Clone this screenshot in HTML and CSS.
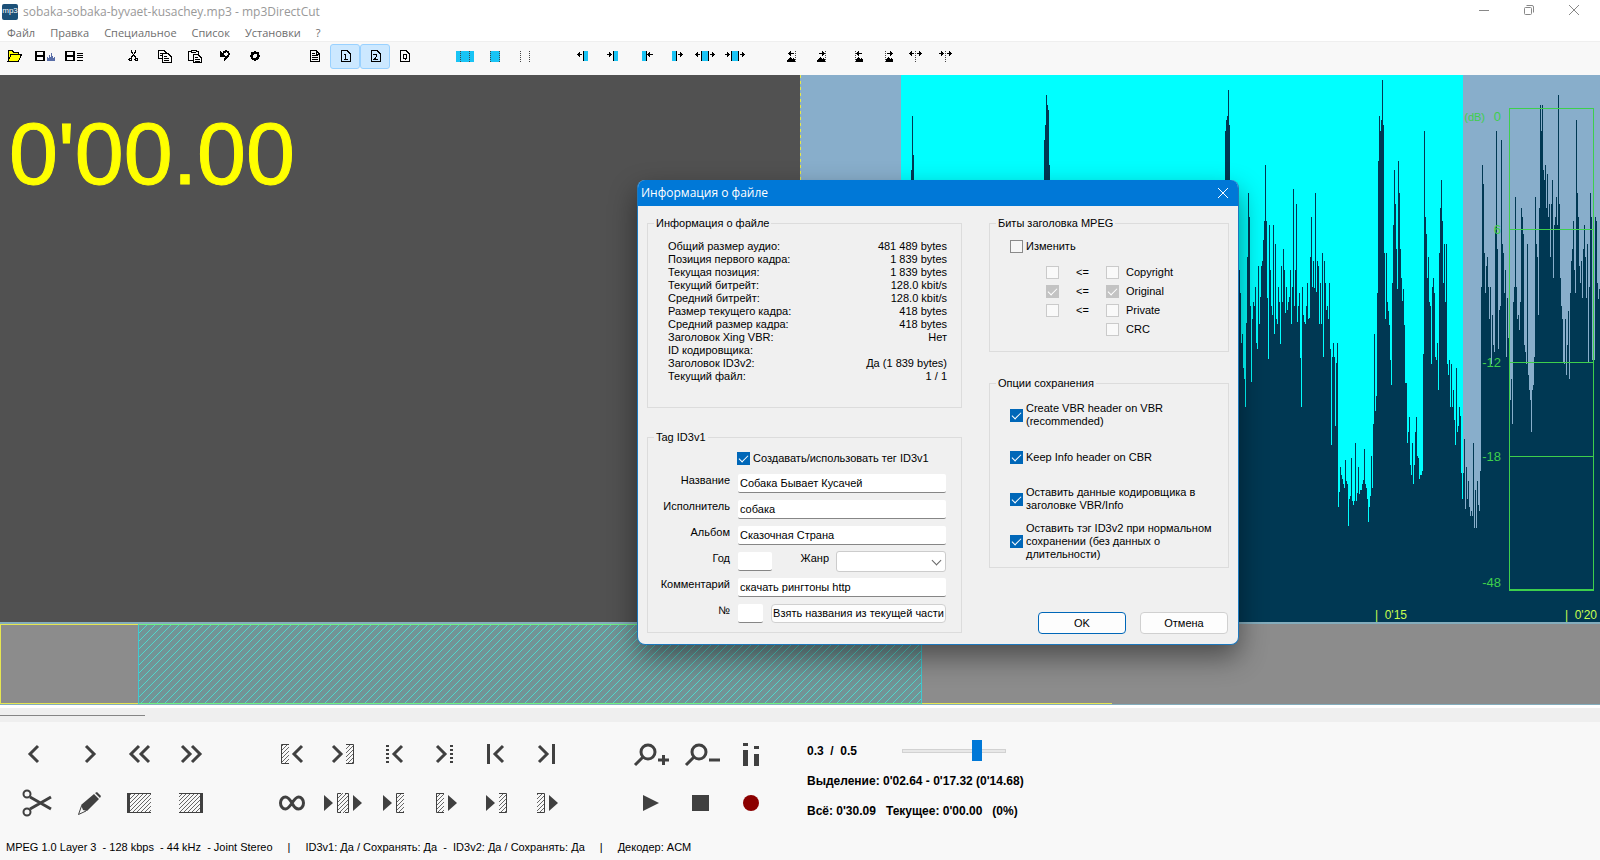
FILE: index.html
```html
<!DOCTYPE html>
<html lang="ru">
<head>
<meta charset="utf-8">
<title>sobaka-sobaka-byvaet-kusachey.mp3 - mp3DirectCut</title>
<link rel="stylesheet" href="styles.css">
</head>
<body>
<svg class="defs" width="0" height="0" aria-hidden="true">
  <defs>
    <pattern id="hatch" width="4" height="4" patternUnits="userSpaceOnUse"><path d="M-1 5L5 -1M-1 1L1 -1M3 5L5 3" stroke="#404040" stroke-width="0.8"/></pattern>
    <pattern id="hatch-selection" width="8" height="8" patternUnits="userSpaceOnUse"><path d="M-1 9L9 -1M-1 1L1 -1M7 9L9 7" stroke="#52d6cc" stroke-width="1"/></pattern>
  </defs>
</svg>
<div class="app">
  <header class="titlebar">
    <span class="logo">mp3</span>
    <span class="caption">sobaka-sobaka-byvaet-kusachey.mp3 - mp3DirectCut</span>
    <div class="window-buttons">
      <button aria-label="Свернуть"><svg width="12" height="12"><path d="M1 6.500H11"/></svg></button>
      <button aria-label="Развернуть"><svg width="12" height="12"><rect x="1.500" y="3.500" width="7" height="7" rx="1"/><path d="M3.500 1.500H9Q10.500 1.500 10.500 3V8.500"/></svg></button>
      <button aria-label="Закрыть"><svg width="12" height="12"><path d="M1 1L11 11M11 1L1 11"/></svg></button>
    </div>
  </header>
  <nav class="menu">
    <button>Файл</button><button>Правка</button><button>Специальное</button><button>Список</button><button>Установки</button><button>?</button>
  </nav>
  <div class="toolbar">
    <div class="tools">
      <button aria-label="Открыть"><svg viewBox="0 0 30 24"><path d="M8 16.500V7.500L9 6.500H12L13.500 8H18.500V10" fill="#ff0"/><path d="M8 17L11 10.500H21.500L18.500 17Z" fill="#ff0"/></svg></button>
      <button aria-label="Сохранить выделение"><svg viewBox="0 0 30 24"><path class="f" fill-rule="evenodd" d="M5 7H15V17H5ZM7 8V11H13V8ZM7 13V16H13V13Z"/><path d="M17 17V13H18V14H19V11H20V13H21V9H22V12H23V14H24V13H25V17Z" fill="#5a6ea8" stroke="none"/></svg></button>
      <button aria-label="Сохранить всё"><svg viewBox="0 0 30 24"><path class="f" fill-rule="evenodd" d="M5 7H15V17H5ZM7 8V11H13V8ZM7 13V16H13V13Z"/><path d="M17 9.500H23M17 11.500H23M17 13.500H23M17 16.500H23"/></svg></button>
    </div>
    <div class="tools">
      <button aria-label="Вырезать"><svg viewBox="0 0 30 24"><path d="M11.500 5.500V8L16 14M15.500 5.500V8L11 14"/><circle cx="10.500" cy="15.500" r="1.500"/><circle cx="16.500" cy="15.500" r="1.500"/></svg></button>
      <button aria-label="Копировать"><svg viewBox="0 0 30 24"><path d="M12 14.500H8.500V6.500H14L16.500 9M10 9.500H13M10 11.500H12M12.500 9.500H18L21.500 13V18.500H12.500ZM14 12.500H17M14 14.500H19M14 16.500H19" fill="none"/></svg></button>
      <button aria-label="Вставить"><svg viewBox="0 0 30 24"><path d="M13 16.500H8.500V7.500H11V6.500H16V7.500H18.500V10M11 8.500H16M13.500 10.500H18L21.500 14V18.500H13.500ZM15 13.500H18M15 15.500H20M15 17H20"/></svg></button>
      <button aria-label="Отменить"><svg viewBox="0 0 30 24"><path d="M13 10Q14 7 17 7.500Q20 9 18 12L14 16.500" stroke-width="2"/><path class="f" d="M10 7V13H16Z"/></svg></button>
      <button aria-label="Настройки"><svg viewBox="0 0 30 24"><circle cx="15" cy="12" r="3" stroke-width="2"/><path d="M15 7V9M15 15V17M10 12H12M18 12H20M11.500 8.500L13 10M17 14L18.500 15.500M18.500 8.500L17 10M13 14L11.500 15.500" stroke-width="2"/></svg></button>
    </div>
    <div class="tools">
      <button aria-label="Список частей"><svg viewBox="0 0 30 24"><path d="M10.500 6.500H16L19.500 10V17.500H10.500ZM12 9.500H15M12 11.500H18M12 13.500H18M12 15.500H18M16 7V10H19"/></svg></button>
      <button class="on" aria-label="Тег ID3v1" aria-pressed="true"><svg viewBox="0 0 30 24"><path d="M11.500 6.500H17L20.500 10V17.500H11.500ZM14 10.500H15.500V15M14 15.500H18"/></svg></button>
      <button class="on" aria-label="Тег ID3v2" aria-pressed="true"><svg viewBox="0 0 30 24"><path d="M11.500 6.500H17L20.500 10V17.500H11.500ZM13.500 11Q15 9.500 16.500 11Q17 12.500 14 15.500H18"/></svg></button>
      <button aria-label="Качество"><svg viewBox="0 0 30 24"><path d="M10.500 6.500H16L19.500 10V17.500H10.500ZM13.500 10.500H16.500V14.500H13.500ZM15.500 13.500V16"/></svg></button>
    </div>
    <div class="tools">
      <button aria-label="Выделить всё"><svg viewBox="0 0 30 24"><path fill="#19c4f5" stroke="none" d="M6 7H24V18H6Z"/><path class="dot" d="M10.500 7V18M19.500 7V18"/></svg></button>
      <button aria-label="Выделить часть"><svg viewBox="0 0 30 24"><path fill="#19c4f5" stroke="none" d="M10 7H20V18H10Z"/><path class="dot" d="M10.500 7V18M19.500 7V18"/></svg></button>
      <button aria-label="Снять выделение"><svg viewBox="0 0 30 24"><path class="dot" d="M10.500 7V18M19.500 7V18"/></svg></button>
    </div>
    <div class="tools">
      <button aria-label="Начало влево"><svg viewBox="0 0 30 24"><path fill="#19c4f5" stroke="none" d="M13 7H18V17H13Z"/><path d="M13.500 7V17M8 10.500H12"/><path class="f" d="M10 8V13L7 10.500Z"/></svg></button>
      <button aria-label="Начало вправо"><svg viewBox="0 0 30 24"><path fill="#19c4f5" stroke="none" d="M13 7H18V17H13Z"/><path d="M13.500 7V17M7 10.500H11"/><path class="f" d="M9 8V13L12 10.500Z"/></svg></button>
      <button aria-label="Конец влево"><svg viewBox="0 0 30 24"><path fill="#19c4f5" stroke="none" d="M12 7H16V17H12Z"/><path d="M16.500 7V17M18 10.500H23"/><path class="f" d="M20 8V13L17 10.500Z"/></svg></button>
      <button aria-label="Конец вправо"><svg viewBox="0 0 30 24"><path fill="#19c4f5" stroke="none" d="M12 7H16V17H12Z"/><path d="M16.500 7V17M18 10.500H22"/><path class="f" d="M20 8V13L23 10.500Z"/></svg></button>
      <button aria-label="Расширить"><svg viewBox="0 0 30 24"><path fill="#19c4f5" stroke="none" d="M12 7H18V17H12Z"/><path d="M11.500 7V17M18.500 7V17M6 10.500H10M20 10.500H24"/><path class="f" d="M8 8V13L5 10.500ZM22 8V13L25 10.500Z"/></svg></button>
      <button aria-label="Сдвинуть"><svg viewBox="0 0 30 24"><path fill="#19c4f5" stroke="none" d="M12 7H18V17H12Z"/><path d="M11.500 7V17M18.500 7V17M5 10.500H9M20 10.500H24"/><path class="f" d="M7 8V13L10 10.500ZM22 8V13L25 10.500Z"/></svg></button>
    </div>
    <div class="tools">
      <button aria-label="К паузе назад, начало"><svg viewBox="0 0 30 24"><path class="dot" d="M15.500 7V18"/><path d="M9 9.500H14"/><path class="f" d="M11 7V12L8 9.500ZM7 18V16L10 13L12 15L13 14L15 16V18Z"/></svg></button>
      <button aria-label="К паузе вперёд, начало"><svg viewBox="0 0 30 24"><path class="dot" d="M15.500 7V18"/><path d="M9 9.500H14"/><path class="f" d="M12 7V12L15 9.500ZM7 18V16L10 13L12 15L13 14L15 16V18Z"/></svg></button>
      <button aria-label="К паузе назад, конец"><svg viewBox="0 0 30 24"><path class="dot" d="M15.500 7V18"/><path d="M17 9.500H22"/><path class="f" d="M19 7V12L16 9.500ZM16 18V16L18 13L20 15L21 14L23 16V18Z"/></svg></button>
      <button aria-label="К паузе вперёд, конец"><svg viewBox="0 0 30 24"><path class="dot" d="M15.500 7V18"/><path d="M17 9.500H21"/><path class="f" d="M20 7V12L23 9.500ZM16 18V16L18 13L20 15L21 14L23 16V18Z"/></svg></button>
      <button aria-label="Разделить"><svg viewBox="0 0 30 24"><path class="dot" d="M15.500 7V18"/><path d="M9 9.500H14M17 9.500H22"/><path class="f" d="M12 7V12L9 9.500ZM19 7V12L22 9.500Z"/></svg></button>
      <button aria-label="Перейти"><svg viewBox="0 0 30 24"><path class="dot" d="M15.500 7V18"/><path d="M9 9.500H14M17 9.500H22"/><path class="f" d="M11 7V12L14 9.500ZM19 7V12L22 9.500Z"/></svg></button>
    </div>
  </div>

  <main class="wave">
    <div class="before"><output class="clock">0'00.00</output></div>
    <div class="after">
      <svg class="plot" viewBox="800 75 800 547" preserveAspectRatio="none" shape-rendering="crispEdges">
        <path fill="#88aecb" d="M800 75H1600V622H800Z"/>
        <path fill="#0ff" d="M901 75H1463V622H901Z"/>
        <path fill="#003853" d="M911 622V170H912V116H913V155H914V622ZM1044 622V140H1045V125H1046V95H1047V105H1048V110H1049V165H1050V622ZM1225 622V131H1226V120H1227V116H1228V90H1229V125H1230V622Z"/>
        <path fill="#003853" transform="translate(1190 70) scale(.33333 .35714)" d="M144 1550V560H149V625H152V765H156V740H158V835H162V865H165V943H168V708H171V525H174V345H177V412H180V660H183V875H186V697H189V650H192V662H195V608H198V765H201V780H204V548H207V712H210V636H213V550H216V535H219V475H222V423H225V266H228V423H231V638H234V810H237V435H240V560H243V660H246V685H249V435H252V738H255V487H258V697H261V712H264V608H267V650H270V768H273V550H276V650H279V502H282V560H285V680H288V608H291V673H294V650H297V636H300V560H303V712H306V608H309V333H312V662H315V560H318V375H321V706H324V660H327V625H330V806H333V943H336V608H339V685H342V706H345V712H348V660H351V597H354V697H357V695H360V525H363V412H366V608H369V535H372V610H375V345H378V623H381V535H384V550H387V712H390V597H393V712H396V512H399V805H402V535H405V597H408V673H411V660H414V697H417V597H420V780H423V1050H426V805H429V765H432V805H435V997H438V820H441V765H444V1223H447V1182H450V1112H453V1135H456V1146H459V1158H462V1170H465V1092H468V1152H471V1158H474V1276H477V1200H480V1194H483V1087H486V1208H489V1217H492V1206H495V1045H498V1206H501V1184H504V1112H507V1188H510V1176H516V1158H519V1147H522V1062H525V1158H528V1170H531V1200H534V1266H537V1223H540V1192H543V1081H546V1170H549V990H552V740H555V955H558V912H561V625H564V255H567V130H570V170H573V140H576V28H579V155H582V512H585V697H588V512H591V650H594V675H597V715H600V812H603V882H606V597H609V435H612V280H615V375H618V502H621V612H624V255H627V345H630V502H633V583H636V648H639V612H642V715H645V876H651V1045H654V1014H657V972H660V1105H663V1134H666V1045H669V1158H672V1105H675V1015H678V972H681V1081H684V1087H687V1145H690V1134H696V1122H699V794H702V172H705V412H708V460H711V583H714V525H717V650H720V662H723V823H726V608H729V583H732V625H735V805H738V812H741V765H744V895H747V512H750V387H753V308H756V423H759V597H762V487H765V650H768V487H771V823H774V853H777V812H780V943H783V823H786V943H789V895H792V980H795V1050H798V835H801V1014H804V997H807V943H810V970H813V1128H816V1200H819V1128H822V1034H825V1229H828V1112H831V1200H834V1152H837V1223H840V1248H843V1235H846V1248H849V1045H852V1282H855V1176H858V1282H861V1152H864V1217H867V1235H870V1122H873V608H876V266H879V320H882V512H885V625H888V550H891V525H894V608H897V697H900V608H903V823H906V685H909V770H912V790H915V440H918V172H921V502H924V780H927V673H930V660H933V196H936V487H939V512H942V625H945V560H948V805H951V638H954V750H957V805H960V925H963V865H966V990H969V650H972V608H975V357H978V608H981V697H984V685H987V727H990V650H993V387H996V412H999V460H1002V770H1005V790H1008V823H1011V487H1014V853H1017V895H1020V925H1023V1014H1026V895H1029V882H1032V805H1035V357H1038V487H1041V525H1044V685H1047V387H1050V98H1053V172H1056V98H1059V280H1062V308H1065V266H1068V387H1071V292H1074V412H1077V375H1080V525H1083V375H1086V308H1089V583H1092V435H1095V412H1098V357H1101V435H1104V70H1107V375H1110V583H1113V660H1116V697H1119V820H1122V823H1125V697H1128V853H1131V770H1134V675H1137V865H1140V625H1143V535H1146V502H1149V423H1152V560H1155V625H1158V140H1161V345H1164V412H1167V550H1170V597H1173V535H1176V638H1179V502H1182V435H1185V525H1188V638H1191V487H1194V820H1197V608H1200V345H1203V412H1206V812H1209V770H1212V812H1215V412H1218V423H1221V597H1224V640H1227V612H1232V1550Z"/>
        <path d="M800.500 75V622" stroke="#e8e84a" stroke-dasharray="3 3"/>
      </svg>
      <div class="meter">
        <span class="unit">(dB)</span>
        <span class="db db-0">0</span><span class="db db-6">6</span><span class="db db-12">-12</span><span class="db db-18">-18</span><span class="db db-48">-48</span>
        <i class="line line-6"></i><i class="line line-12"></i><i class="line line-18"></i>
      </div>
      <span class="tick tick-15">| &nbsp;0'15</span>
      <span class="tick tick-20">| &nbsp;0'20</span>
    </div>
  </main>

  <section class="overview">
    <div class="visible-part"></div>
    <svg class="selection"><rect width="100%" height="100%" fill="url(#hatch-selection)"/></svg>
  </section>
  <div class="scroll"><div class="scroll-thumb"></div></div>

  <section class="controls">
    <div class="pad four">
      <button aria-label="Назад"><svg viewBox="0 0 51 40"><path d="M26 12L18 20L26 28"/></svg></button>
      <button aria-label="Вперёд"><svg viewBox="0 0 51 40"><path d="M23 12L31 20L23 28"/></svg></button>
      <button aria-label="Быстро назад"><svg viewBox="0 0 51 40"><path d="M25 12l-8 8 8 8M35 12l-8 8 8 8"/></svg></button>
      <button aria-label="Быстро вперёд"><svg viewBox="0 0 51 40"><path d="M17 12l8 8-8 8M27 12l8 8-8 8"/></svg></button>
      <button aria-label="Вырезать"><svg viewBox="0 0 51 40"><circle cx="15" cy="11" r="3.500" stroke-width="2"/><circle cx="15" cy="29" r="3.500" stroke-width="2"/><path d="M18 14L39 26M18 26L39 14"/></svg></button>
      <button aria-label="Правка"><svg viewBox="0 0 51 40"><path class="s" d="M18 22L31 11L36 16L24 28L20 27ZM32 10L34 9L38 13L37 15Z"/><path class="thin" d="M18.500 23L15.500 31.500L23 28"/></svg></button>
      <button aria-label="Начало выделения"><svg viewBox="0 0 51 40"><path class="h" d="M15 10H37V30H15Z"/><path class="thin" d="M14 10.500H37M14 29.500H37"/><path class="s" d="M13 10H16V30H13Z"/></svg></button>
      <button aria-label="Конец выделения"><svg viewBox="0 0 51 40"><path class="h" d="M14 10H36V30H14Z"/><path class="thin" d="M14 10.500H37M14 29.500H37"/><path class="s" d="M35 10H38V30H35Z"/></svg></button>
    </div>
    <div class="pad six">
      <button aria-label="К началу выделения"><svg viewBox="0 0 51 40"><path class="h" d="M15 10H23V30H15Z"/><path class="thin" d="M23 10.500H15.500V29.500H23"/><path d="M36 12L28 20L36 28"/></svg></button>
      <button aria-label="К концу выделения"><svg viewBox="0 0 51 40"><path class="h" d="M29 10H37V30H29Z"/><path class="thin" d="M29 10.500H36.500V29.500H29"/><path d="M16 12L24 20L16 28"/></svg></button>
      <button aria-label="К предыдущей метке"><svg viewBox="0 0 51 40"><path d="M19.500 11V29" stroke-dasharray="2 2"/><path d="M34 12L26 20L34 28"/></svg></button>
      <button aria-label="К следующей метке"><svg viewBox="0 0 51 40"><path d="M32.500 11V29" stroke-dasharray="2 2"/><path d="M18 12L26 20L18 28"/></svg></button>
      <button aria-label="В начало"><svg viewBox="0 0 51 40"><path d="M18.500 10V30M33 12L25 20L33 28"/></svg></button>
      <button aria-label="В конец"><svg viewBox="0 0 51 40"><path d="M32.500 10V30M18 12L26 20L18 28"/></svg></button>
      <button aria-label="Повтор"><svg viewBox="0 0 51 40"><path d="M26 20C23 15 21 14 19.500 14A5 6 0 0 0 19.500 26C22 26 24 23 26 20S30 14 32.500 14A5 6 0 0 1 32.500 26C30 26 28 24 26 20Z"/></svg></button>
      <button aria-label="Играть с пропуском"><svg viewBox="0 0 51 40"><path class="s" d="M7 12L16 20L7 28ZM36 12L45 20L36 28Z"/><path class="h" d="M20 10H32V30H20Z"/><path class="thin" d="M24 10.500H20.500V29.500H24M28 10.500H31.500V29.500H28"/></svg></button>
      <button aria-label="Играть до начала"><svg viewBox="0 0 51 40"><path class="s" d="M15 12L24 20L15 28Z"/><path class="h" d="M28 10H36V30H28Z"/><path class="thin" d="M36 10.500H28.500V29.500H36"/></svg></button>
      <button aria-label="Играть от начала"><svg viewBox="0 0 51 40"><path class="s" d="M29 12L38 20L29 28Z"/><path class="h" d="M17 10H25V30H17Z"/><path class="thin" d="M25 10.500H17.500V29.500H25"/></svg></button>
      <button aria-label="Играть до конца"><svg viewBox="0 0 51 40"><path class="s" d="M16 12L25 20L16 28Z"/><path class="h" d="M29 10H37V30H29Z"/><path class="thin" d="M29 10.500H36.500V29.500H29"/></svg></button>
      <button aria-label="Играть от конца"><svg viewBox="0 0 51 40"><path class="s" d="M28 12L37 20L28 28Z"/><path class="h" d="M16 10H24V30H16Z"/><path class="thin" d="M16 10.500H23.500V29.500H16"/></svg></button>
    </div>
    <div class="pad three">
      <button aria-label="Увеличить"><svg viewBox="0 0 51 40"><circle cx="22" cy="18" r="7"/><path d="M17 23L9 31M32 26H43M37.500 21V31"/></svg></button>
      <button aria-label="Уменьшить"><svg viewBox="0 0 51 40"><circle cx="22" cy="18" r="7"/><path d="M17 23L9 31M32 26H43"/></svg></button>
      <button aria-label="Уровень"><svg viewBox="0 0 51 40"><path class="s" d="M15 9H20V12H15ZM15 16H20V32H15ZM26 12H31V15H26ZM26 20H31V32H26Z"/></svg></button>
      <button aria-label="Воспроизвести"><svg viewBox="0 0 51 40"><path class="s" d="M17 12L33 20L17 28Z"/></svg></button>
      <button aria-label="Стоп"><svg viewBox="0 0 51 40"><path class="s" d="M15 12H32V28H15Z"/></svg></button>
      <button aria-label="Запись"><svg viewBox="0 0 51 40"><circle cx="23" cy="20" r="8" fill="#8b0000" stroke="none"/></svg></button>
    </div>
    <div class="info">
      <div class="info-row"><label class="speed" for="speed">0.3 &nbsp;/ &nbsp;0.5</label><input class="slider" id="speed" type="range" min="0" max="100" value="75"></div>
      <div class="info-row">Выделение: 0'02.64 - 0'17.32 (0'14.68)</div>
      <div class="info-row">Всё: 0'30.09 &nbsp; Текущее: 0'00.00 &nbsp; (0%)</div>
    </div>
  </section>
  <footer class="status">
    <span>MPEG 1.0 Layer 3 &nbsp;- 128 kbps &nbsp;- 44 kHz &nbsp;- Joint Stereo</span><span>|</span><span>ID3v1: Да / Сохранять: Да &nbsp;- &nbsp;ID3v2: Да / Сохранять: Да</span><span>|</span><span>Декодер: ACM</span>
  </footer>

  <div class="dialog" role="dialog" aria-label="Информация о файле">
    <div class="dialog-title"><span>Информация о файле</span><button aria-label="Закрыть"><svg width="12" height="12"><path d="M1 1L11 11M11 1L1 11"/></svg></button></div>
    <div class="dialog-body">
      <div class="col-left">
        <fieldset class="group facts">
          <legend>Информация о файле</legend>
          <dl>
            <div><dt>Общий размер аудио:</dt><dd>481 489 bytes</dd></div>
            <div><dt>Позиция первого кадра:</dt><dd>1 839 bytes</dd></div>
            <div><dt>Текущая позиция:</dt><dd>1 839 bytes</dd></div>
            <div><dt>Текущий битрейт:</dt><dd>128.0 kbit/s</dd></div>
            <div><dt>Средний битрейт:</dt><dd>128.0 kbit/s</dd></div>
            <div><dt>Размер текущего кадра:</dt><dd>418 bytes</dd></div>
            <div><dt>Средний размер кадра:</dt><dd>418 bytes</dd></div>
            <div><dt>Заголовок Xing VBR:</dt><dd>Нет</dd></div>
            <div><dt>ID кодировщика:</dt><dd></dd></div>
            <div><dt>Заголовок ID3v2:</dt><dd>Да (1 839 bytes)</dd></div>
            <div><dt>Текущий файл:</dt><dd>1 / 1</dd></div>
          </dl>
        </fieldset>
        <fieldset class="group tag">
          <legend>Tag ID3v1</legend>
          <label class="check use-tag"><input type="checkbox" checked>Создавать/использовать тег ID3v1</label>
          <div class="form">
            <label for="f-title">Название</label><input id="f-title" type="text" value="Собака Бывает Кусачей">
            <label for="f-artist">Исполнитель</label><input id="f-artist" type="text" value="собака">
            <label for="f-album">Альбом</label><input id="f-album" type="text" value="Сказочная Страна">
            <label for="f-year">Год</label>
            <div class="form-line genre-line"><input class="year" id="f-year" type="text"><label class="genre-label" for="f-genre">Жанр</label><select id="f-genre"><option></option></select></div>
            <label for="f-comment">Комментарий</label><input id="f-comment" type="text" value="скачать рингтоны http">
            <label for="f-track">№</label>
            <div class="form-line"><input class="track" id="f-track" type="text"><button class="btn take">Взять названия из текущей части</button></div>
          </div>
        </fieldset>
      </div>
      <div class="col-right">
        <fieldset class="group bits">
          <legend>Биты заголовка MPEG</legend>
          <label class="check"><input type="checkbox">Изменить</label>
          <div class="bit-rows">
            <div class="bit"><input type="checkbox" aria-label="Новый Copyright" disabled><span>&lt;=</span><label class="check"><input type="checkbox" disabled>Copyright</label></div>
            <div class="bit"><input type="checkbox" aria-label="Новый Original" checked disabled><span>&lt;=</span><label class="check"><input type="checkbox" checked disabled>Original</label></div>
            <div class="bit"><input type="checkbox" aria-label="Новый Private" disabled><span>&lt;=</span><label class="check"><input type="checkbox" disabled>Private</label></div>
            <div class="bit"><label class="check last"><input type="checkbox" disabled>CRC</label></div>
          </div>
        </fieldset>
        <fieldset class="group saving">
          <legend>Опции сохранения</legend>
          <label class="check"><input type="checkbox" checked><span>Create VBR header on VBR (recommended)</span></label>
          <label class="check"><input type="checkbox" checked><span>Keep Info header on CBR</span></label>
          <label class="check"><input type="checkbox" checked><span>Оставить данные кодировщика в заголовке VBR/Info</span></label>
          <label class="check"><input type="checkbox" checked><span>Оставить тэг ID3v2 при нормальном сохранении (без данных о длительности)</span></label>
        </fieldset>
        <div class="actions"><button class="btn primary">OK</button><button class="btn">Отмена</button></div>
      </div>
    </div>
  </div>
</div>
</body>
</html>
```

FILE: styles.css
```css
* { box-sizing: border-box; }
html, body { height: 100%; }
body { margin: 0; font-family: "Liberation Sans", Arial, sans-serif; font-size: 11px; color: #000; background: #f8f8f8; }
button { font: inherit; color: inherit; background: none; border: 0; padding: 0; margin: 0; }
.defs { position: absolute; }
.app { position: relative; display: flex; flex-direction: column; min-height: 100vh; overflow: hidden; }

.titlebar { display: flex; align-items: center; height: 24px; padding: 0 4px 0 2px; background: #fff; font: 12px/16px "Open Sans", "Noto Sans", sans-serif; color: #999; }
.logo { width: 16px; height: 16px; border-radius: 2px; background: #1c5078; color: #fff; font: 8px/13px "Liberation Sans", sans-serif; text-align: center; }
.caption { margin-left: 5px; }
.window-buttons { display: flex; align-self: flex-start; margin-left: auto; }
.window-buttons button { display: grid; place-items: center; width: 45px; height: 20px; }
.window-buttons svg { fill: none; stroke: #888; }

.menu { display: flex; gap: 15px; height: 17px; padding-left: 7px; background: #fff; font: 11px/17px "Open Sans", "Noto Sans", sans-serif; color: #6e6e6e; }

.toolbar { display: flex; gap: 30px; height: 34px; padding-top: 2px; background: #f8f8f8; border-top: 1px solid #efefef; }
.tools { display: flex; }
.tools button { display: flex; width: 30px; height: 25px; border: 1px solid transparent; border-radius: 3px; }
.tools button.on { background: #cce8ff; border-color: #99d1ff; }
.tools svg { flex: none; width: 30px; height: 24px; margin: -1px; fill: none; stroke: #000; shape-rendering: crispEdges; }
.tools .f { fill: #000; stroke: none; }
.tools .dot { stroke: #444; stroke-dasharray: 1 1; }

.wave { display: flex; flex: 1; min-height: 300px; }
.before, .after { flex: 1; }
.before { background: #515151; }
.clock { display: block; padding: 29px 9px; font-size: 88px; line-height: 100px; color: #ff0; -webkit-text-stroke: 1px #ff0; }
.after { position: relative; background: #003853; }
.plot { display: block; position: absolute; inset: 0; width: 100%; height: 100%; }
.meter { position: absolute; top: 33px; right: 6px; bottom: 31px; width: 85px; border: 1px solid #3ecf4c; border-bottom-width: 2px; color: #3ecf4c; font-size: 13px; line-height: 14px; }
.db { position: absolute; right: 92px; }
.unit { position: absolute; right: 108px; top: 1px; font-size: 11px; }
.db-0 { top: 1px; } .db-6 { top: 114px; } .db-12 { top: 247px; } .db-18 { top: 341px; } .db-48 { top: 467px; }
.line { position: absolute; left: 0; right: 0; height: 1px; background: #3ecf4c; }
.line-6 { top: 120px; } .line-12 { top: 253px; } .line-18 { top: 347px; }
.tick { position: absolute; bottom: 0; font-size: 12px; line-height: 14px; color: #c8ff50; }
.tick-15 { right: 193px; } .tick-20 { right: 3px; }

.overview { position: relative; height: 83px; background: #8c8c8c; border-top: 2px solid #84adbd; border-bottom: 1px solid #84adbd; }
.visible-part { position: absolute; inset: 0 auto 0 0; width: 69.5%; border: 1px solid #e6e650; border-width: 1px 0 1px 1px; }
.selection { position: absolute; left: 138px; top: 0; width: 49%; height: 100%; background: #729496; border: 1px solid #40c8d0; border-top-color: #70f080; border-bottom-color: #70f080; }

.scroll { height: 17px; padding-top: 10px; background: #efefef; border-top: 3px solid #fff; }
.scroll-thumb { width: 145px; height: 1px; margin-top: -3px; background: #858585; }

.controls { display: flex; align-items: flex-start; padding: 12px 12px 8px; min-height: 112px; }
.pad { display: grid; gap: 9px 0; }
.pad.four { grid-template-columns: repeat(4, 51px); }
.pad.six { grid-template-columns: repeat(6, 51px); margin-left: 50px; }
.pad.three { grid-template-columns: repeat(3, 51px); margin-left: 54px; }
.pad button { display: flex; height: 40px; }
.pad svg { width: 51px; height: 40px; fill: none; stroke: #404040; stroke-width: 3; }
.pad .s { fill: #404040; stroke: none; }
.pad .h { fill: url(#hatch); stroke: none; }
.pad .thin { stroke-width: 1; }

.info { margin: 2px 0 0 28px; font-size: 12px; font-weight: bold; }
.info-row { display: flex; align-items: center; height: 30px; }
.speed { width: 95px; }
.slider { appearance: none; width: 104px; height: 22px; margin: 0; background: none; }
.slider::-webkit-slider-runnable-track { height: 4px; background: #e8e8e8; border: 1px solid #d2d2d2; }
.slider::-webkit-slider-thumb { appearance: none; width: 10px; height: 21px; margin-top: -10px; background: #0078d7; }

.status { display: flex; gap: 15px; height: 26px; padding-left: 6px; font-size: 11px; line-height: 26px; white-space: nowrap; }

.dialog { position: absolute; left: calc(50% - 163px); top: 180px; width: 602px; border: 1px solid #1d78bd; border-top: 0; border-radius: 8px; background: #f0f0f0; box-shadow: 0 12px 28px rgba(0, 0, 0, .45); line-height: 13px; overflow: hidden; }
.dialog-title { display: flex; align-items: center; justify-content: space-between; height: 26px; padding: 0 9px 0 3px; background: #0078d7; color: #fff; font: 12px/16px "Open Sans", "Noto Sans", sans-serif; }
.dialog-title button { display: flex; }
.dialog-title svg { fill: none; stroke: #fff; }
.dialog-body { display: grid; grid-template-columns: 315px 240px; justify-content: space-between; padding: 10px 9px; }
.col-left { display: flex; flex-direction: column; gap: 22px; }
.col-right { display: flex; flex-direction: column; gap: 24px; }
.group { margin: 0; min-width: 0; border: 1px solid #dcdcdc; }
.group legend { padding: 0 2px; line-height: 14px; }
.facts { padding: 10px 14px 24px 12px; }
.tag { padding: 4px 15px 9px 8px; }
.bits { padding: 7px 8px 12px 6px; }
.saving { padding: 4px 8px 5px 6px; }
.facts legend { margin-left: -6px; }
.tag legend { margin-left: -2px; }
.facts dl { margin: 0 0 0 8px; }
.facts dl div { display: flex; justify-content: space-between; }
.facts dd { margin: 0; }

input[type="checkbox"] { appearance: none; flex: none; width: 13px; height: 13px; margin: 0; border: 1px solid #8a8a8a; background: #f6f6f6; }
input[type="checkbox"]:checked { border-color: #0067b8; background: #0067b8; }
input[type="checkbox"]:checked::before { content: ""; display: block; width: 8px; height: 4px; margin: 2px 0 0 1px; border: solid #fff; border-width: 0 0 1px 1px; transform: rotate(-45deg); }
input[type="checkbox"]:disabled { border-color: #cacaca; background: #f9f9f9; }
input[type="checkbox"]:disabled:checked { background: #c3c3c3; border-color: #c3c3c3; }
.check { display: flex; align-items: center; gap: 3px; }

.use-tag { height: 20px; margin-left: 81px; }
.form { display: grid; grid-template-columns: 74px 1fr; grid-auto-rows: 19px; gap: 7px 8px; margin-top: 6px; }
.form > label { text-align: right; }
.form input { width: 100%; height: 19px; padding: 0 2px; border: 0; border-bottom: 1px solid #868686; border-radius: 2px; background: #fff; font: inherit; }
.form-line { display: flex; height: 19px; }
.form .year { width: 34px; }
.form .track { width: 25px; }
.genre-label { flex: 1; padding-right: 7px; text-align: right; }
.form select { appearance: none; width: 110px; height: 21px; margin-top: -1px; border: 1px solid #ccc; border-radius: 3px; background: #fff; font: inherit; }
.genre-line { position: relative; }
.genre-line::after { content: ""; position: absolute; right: 6px; top: 5px; width: 6px; height: 6px; border: solid #666; border-width: 0 1px 1px 0; transform: rotate(45deg); }
.btn { height: 22px; border: 1px solid #d0d0d0; border-radius: 4px; background: #fdfdfd; }
.btn.primary { border-color: #0067b8; }
.btn.take { flex: 1; height: 19px; margin-left: 8px; white-space: nowrap; }

.bits > .check { height: 18px; margin-left: 14px; }
.bit-rows { margin: 8px 0 0 50px; }
.bit { display: flex; align-items: center; height: 19px; }
.bit > span { width: 47px; text-align: center; }
.bit .check { gap: 7px; }
.bit .last { margin-left: 60px; }
.saving .check { height: 42px; margin-left: 14px; }
.actions { display: grid; grid-template-columns: 88px 88px; gap: 14px; justify-content: end; margin: 20px 1px 0 0; }
```
